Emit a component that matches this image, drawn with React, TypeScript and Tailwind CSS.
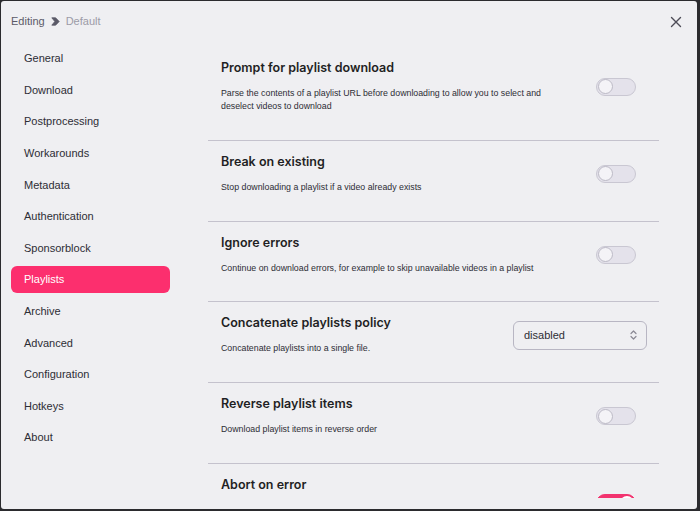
import React from "react";

const sidebar = [
  "General",
  "Download",
  "Postprocessing",
  "Workarounds",
  "Metadata",
  "Authentication",
  "Sponsorblock",
  "Playlists",
  "Archive",
  "Advanced",
  "Configuration",
  "Hotkeys",
  "About",
];

type Row = {
  title: string;
  desc: string;
  control: "toggle" | "toggleOn" | "select";
};

const rows: Row[] = [
  {
    title: "Prompt for playlist download",
    desc: "Parse the contents of a playlist URL before downloading to allow you to select and deselect videos to download",
    control: "toggle",
  },
  {
    title: "Break on existing",
    desc: "Stop downloading a playlist if a video already exists",
    control: "toggle",
  },
  {
    title: "Ignore errors",
    desc: "Continue on download errors, for example to skip unavailable videos in a playlist",
    control: "toggle",
  },
  {
    title: "Concatenate playlists policy",
    desc: "Concatenate playlists into a single file.",
    control: "select",
  },
  {
    title: "Reverse playlist items",
    desc: "Download playlist items in reverse order",
    control: "toggle",
  },
  {
    title: "Abort on error",
    desc: "Abort downloading of further videos if an error occurs, including all remaining videos in the playlist",
    control: "toggleOn",
  },
];

function Toggle({ on }: { on?: boolean }) {
  return (
    <div
      className={
        on
          ? "w-[40px] h-[18px] rounded-full bg-[#f2336f] border border-[#f2336f] flex items-center justify-end px-[1px] mr-[10px]"
          : "w-[40px] h-[18px] rounded-full bg-[#e4e2eb] border border-[#c9c7d2] flex items-center px-[1px] mr-[10px]"
      }
    >
      <div
        className={
          on
            ? "w-[14px] h-[14px] rounded-full bg-white"
            : "w-[15px] h-[15px] rounded-full bg-[#f4f3f7] border-[1.5px] border-[#bcbac6]"
        }
      />
    </div>
  );
}

function Select() {
  return (
    <div className="w-[134px] h-[29px] -mr-px rounded-[6px] border border-[#b8b6c3] flex items-center justify-between pl-[10px] pr-[9px] text-[11px] text-[#2d2d35]">
      <span>disabled</span>
      <svg width="7" height="10" viewBox="0 0 7 10" fill="none" stroke="#8a8894" strokeWidth="1.2" strokeLinecap="round" strokeLinejoin="round">
        <path d="M1 3.5 L3.5 1 L6 3.5" />
        <path d="M1 6.5 L3.5 9 L6 6.5" />
      </svg>
    </div>
  );
}

export default function App() {
  return (
    <div
      className="w-[700px] h-[511px] bg-[#2b2b2e] pl-px pt-px pr-[3px] pb-[2px]"
      style={{ fontFamily: '"Liberation Sans", Arial, sans-serif' }}
    >
      <div className="w-full h-full bg-[#efeff2] rounded-[3px] flex flex-col overflow-hidden">
        <div className="h-[40px] flex items-center pl-[10px] pr-[15px] shrink-0">
          <span className="text-[11px] text-[#5b5a68]">Editing</span>
          <svg className="ml-[6px] mr-[6px]" width="9" height="9" viewBox="0 0 9 9">
            <path d="M0.8 0.8 L4.6 0.8 L8.2 4.5 L4.6 8.2 L0.8 8.2 L3.8 4.5 Z" fill="#5b5a68" strokeLinejoin="round" stroke="#5b5a68" strokeWidth="0.8" />
          </svg>
          <span className="text-[11px] text-[#9c9ba7]">Default</span>
          <div className="flex-1" />
          <svg width="12" height="12" viewBox="0 0 12 12" stroke="#4d4c57" strokeWidth="1.4" strokeLinecap="round" className="mt-[2px]">
            <path d="M1.5 1.5 L10.5 10.5 M10.5 1.5 L1.5 10.5" />
          </svg>
        </div>
        <div className="flex flex-1 min-h-0 pt-[4px]">
          <div className="w-[169px] shrink-0 pl-[10px] flex flex-col gap-[4.6px]">
            {sidebar.map((s) => (
              <div
                key={s}
                className={
                  s === "Playlists"
                    ? "h-[27px] flex items-center pl-[13px] rounded-[6px] bg-[#fc2f6e] text-white text-[11px]"
                    : "h-[27px] flex items-center pl-[13px] text-[11px] text-[#2d2d35]"
                }
              >
                {s}
              </div>
            ))}
          </div>
          <div className="flex-1 min-w-0 pl-[38px] pr-[38px] pb-[11px] flex flex-col">
            <div className="flex-1 min-h-0 overflow-hidden pt-[2px]">
              {rows.map((r) => (
                <div
                  key={r.title}
                  className="flex items-center justify-between border-b border-[#c4c2cd] pl-[13px] pr-[13px] pt-[13px] pb-[26.75px]"
                >
                  <div className="max-w-[340px]">
                    <div
                      className="text-[12.5px] leading-[16px] font-semibold text-[#1f1f24]"
                      style={{ fontFamily: 'Inter, "Liberation Sans", sans-serif' }}
                    >
                      {r.title}
                    </div>
                    <div className="mt-[11px] text-[8.8px] leading-[13px] text-[#2d2d35]">{r.desc}</div>
                  </div>
                  {r.control === "select" ? <Select /> : <Toggle on={r.control === "toggleOn"} />}
                </div>
              ))}
            </div>
          </div>
        </div>
      </div>
    </div>
  );
}
